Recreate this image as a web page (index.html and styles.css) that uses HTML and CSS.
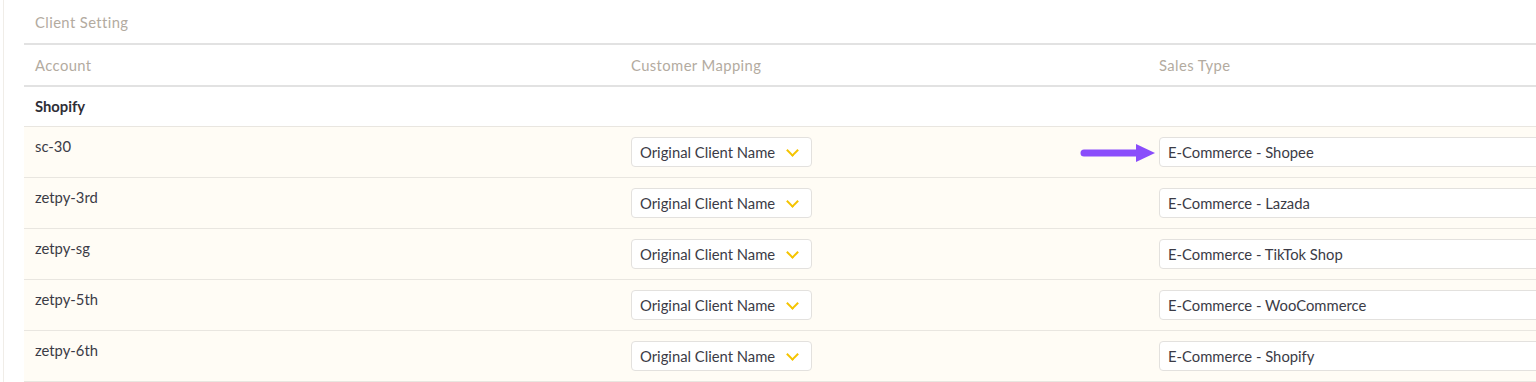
FILE: index.html
```html
<!DOCTYPE html>
<html lang="en">
<head>
  <meta charset="UTF-8" />
  <title>Client Setting</title>
  <link rel="stylesheet" href="styles.css">
</head>
<body>
  <div class="card">
    <div class="card-title">Client Setting</div>
    <table class="grid">
      <thead>
        <tr>
          <th class="col-account">Account</th>
          <th class="col-mapping">Customer Mapping</th>
          <th>Sales Type</th>
        </tr>
      </thead>
      <tbody>
        <tr class="group">
          <td colspan="3">Shopify</td>
        </tr>
        <tr>
          <td>sc-30</td>
          <td><div class="select">Original Client Name <span class="chev"></span></div></td>
          <td class="sales">
            <svg class="arrow" width="76" height="18" viewBox="0 0 76 18">
              <line x1="4" y1="9" x2="58" y2="9" stroke="#8a4dfb" stroke-width="7" stroke-linecap="round"/>
              <polygon points="56,0 75,9 56,18" fill="#8a4dfb"/>
            </svg>
            <div class="field">E-Commerce - Shopee</div>
          </td>
        </tr>
        <tr>
          <td>zetpy-3rd</td>
          <td><div class="select">Original Client Name <span class="chev"></span></div></td>
          <td class="sales"><div class="field">E-Commerce - Lazada</div></td>
        </tr>
        <tr>
          <td>zetpy-sg</td>
          <td><div class="select">Original Client Name <span class="chev"></span></div></td>
          <td class="sales"><div class="field">E-Commerce - TikTok Shop</div></td>
        </tr>
        <tr>
          <td>zetpy-5th</td>
          <td><div class="select">Original Client Name <span class="chev"></span></div></td>
          <td class="sales"><div class="field">E-Commerce - WooCommerce</div></td>
        </tr>
        <tr>
          <td>zetpy-6th</td>
          <td><div class="select">Original Client Name <span class="chev"></span></div></td>
          <td class="sales"><div class="field">E-Commerce - Shopify</div></td>
        </tr>
      </tbody>
    </table>
  </div>
</body>
</html>
```

FILE: styles.css
```css
body { margin: 0; background: #fff; font-family: Lato, "Open Sans", sans-serif; font-size: 14.8px; color: #3b3b46; overflow: hidden; }
.card { margin-left: 3px; border-left: 1px solid #f0ede8; padding-left: 20px; min-height: 382px; }
.card-title { height: 43px; line-height: 44px; padding-left: 11px; color: #b3ab9f; letter-spacing: 0.4px; border-bottom: 2px solid #e2e2e2; }

.grid { border-collapse: collapse; width: 1600px; table-layout: fixed; }
.grid th { text-align: left; font-weight: normal; color: #b3ab9f; letter-spacing: 0.4px; height: 40px; padding: 0 11px; border-bottom: 2px solid #e2e2e2; }
.col-account { width: 574px; }
.col-mapping { width: 506px; }

.grid td { vertical-align: top; padding: 9px 11px 10px; height: 31px; line-height: 20px; border-bottom: 1px solid #e9e6e0; background: #fffcf5; }
.grid tr.group td { background: #fff; height: 20px; padding: 9px 11px 10px; color: #2e2e36; font-weight: bold; }
.grid td .select, .grid td .field { margin-top: 1px; }

.select { display: inline-flex; align-items: center; box-sizing: border-box; width: 181px; height: 30px; padding: 0 8px; background: #fff; border: 1px solid #e3e1de; border-radius: 4px; }
.chev { width: 7px; height: 7px; margin-left: auto; margin-right: 6px; margin-top: -4px; border-right: 2px solid #f5c400; border-bottom: 2px solid #f5c400; transform: rotate(45deg); }

.sales { position: relative; }
.field { box-sizing: border-box; height: 30px; line-height: 28px; padding: 0 8px; background: #fff; border: 1px solid #e3e1de; border-radius: 4px; }
.arrow { position: absolute; left: -68px; top: 17px; }
```
